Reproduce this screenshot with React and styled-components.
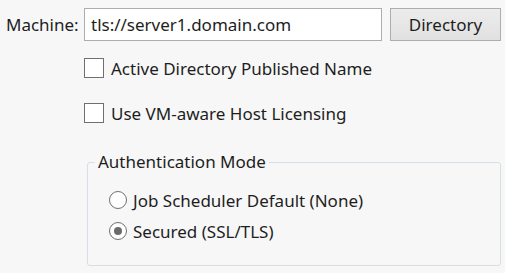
import React from "react";
import styled, { createGlobalStyle } from "styled-components";

const GlobalStyle = createGlobalStyle`
  body {
    margin: 0;
    background: #f7f7f7;
    font-family: "Noto Sans", "Open Sans", sans-serif;
    font-size: 17px;
    color: #1e1e1e;
  }
`;

const Page = styled.div`
  width: 505px;
  height: 273px;
  box-sizing: border-box;
  padding: 8px 4px 0 6px;
  display: flex;
  flex-direction: column;
`;

const MachineRow = styled.div`
  display: flex;
  align-items: center;
  height: 33px;
`;

const Label = styled.span`
  width: 78px;
  flex: none;
`;

const TextBox = styled.div`
  width: 298px;
  height: 33px;
  box-sizing: border-box;
  border: 1px solid #abadb3;
  background: #fff;
  padding: 0 6px;
  display: flex;
  align-items: center;
`;

const Button = styled.button`
  margin-left: 8px;
  width: 111px;
  height: 33px;
  box-sizing: border-box;
  border: 1px solid #adadad;
  background: linear-gradient(#ececec, #e1e1e1);
  font: inherit;
  color: inherit;
  padding: 0;
`;

const CheckRow = styled.label`
  display: flex;
  align-items: center;
  margin-left: 78px;
  margin-top: ${(p) => p.$top}px;
  height: 20px;
`;

const Box = styled.span`
  width: 20px;
  height: 20px;
  box-sizing: border-box;
  border: 1px solid #707070;
  background: #fff;
  margin-right: 7px;
  flex: none;
`;

const Group = styled.fieldset`
  margin: 29px 0 0 81px;
  width: 414px;
  height: 114px;
  box-sizing: border-box;
  border: 1px solid #d5dfe5;
  border-radius: 3px;
  padding: 0;
  display: flex;
  flex-direction: column;
`;

const Legend = styled.legend`
  padding: 0 3px;
  margin-left: 7px;
  line-height: 20px;
`;

const RadioList = styled.div`
  display: flex;
  flex-direction: column;
  gap: 11px;
  padding: 18px 0 0 21px;
`;

const RadioRow = styled.label`
  display: flex;
  align-items: center;
  height: 20px;
`;

const Radio = styled.span`
  width: 18px;
  height: 18px;
  box-sizing: border-box;
  border: 1px solid #707070;
  border-radius: 50%;
  background: #fff;
  margin-right: 6px;
  flex: none;
  display: flex;
  align-items: center;
  justify-content: center;
  &::after {
    content: "";
    width: 8px;
    height: 8px;
    border-radius: 50%;
    background: ${(p) => (p.$checked ? "#6b6b6b" : "transparent")};
  }
`;

export default function App() {
  return (
    <>
      <GlobalStyle />
      <Page>
        <MachineRow>
          <Label>Machine:</Label>
          <TextBox>tls://server1.domain.com</TextBox>
          <Button>Directory</Button>
        </MachineRow>
        <CheckRow $top={17}>
          <Box />
          Active Directory Published Name
        </CheckRow>
        <CheckRow $top={25}>
          <Box />
          Use VM-aware Host Licensing
        </CheckRow>
        <Group>
          <Legend>Authentication Mode</Legend>
          <RadioList>
            <RadioRow>
              <Radio />
              Job Scheduler Default (None)
            </RadioRow>
            <RadioRow>
              <Radio $checked />
              Secured (SSL/TLS)
            </RadioRow>
          </RadioList>
        </Group>
      </Page>
    </>
  );
}
